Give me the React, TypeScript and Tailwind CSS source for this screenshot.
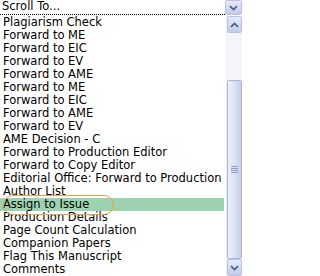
import React from "react";

const items = [
  "Plagiarism Check",
  "Forward to ME",
  "Forward to EIC",
  "Forward to EV",
  "Forward to AME",
  "Forward to ME",
  "Forward to EIC",
  "Forward to AME",
  "Forward to EV",
  "AME Decision - C",
  "Forward to Production Editor",
  "Forward to Copy Editor",
  "Editorial Office: Forward to Production",
  "Author List",
  "Assign to Issue",
  "Production Details",
  "Page Count Calculation",
  "Companion Papers",
  "Flag This Manuscript",
  "Comments",
];

const Chevron = ({ up }: { up?: boolean }) => (
  <svg width="9" height="6" viewBox="0 0 9 6" className={up ? "rotate-180" : ""}>
    <path d="M1 1.2 L4.5 4.6 L8 1.2" fill="none" stroke="#4d6185" strokeWidth="1.8" />
  </svg>
);

const ScrollButton = ({ up }: { up?: boolean }) => (
  <div className="h-[17px] w-full flex items-center justify-center rounded-[2px] border border-[#b7c1e0] bg-gradient-to-b from-[#e6ebfb] to-[#c3cbea]">
    <Chevron up={up} />
  </div>
);

export default function App() {
  return (
    <div
      className="w-[242px] h-[276px] bg-white text-black overflow-hidden flex flex-col"
      style={{ fontFamily: '"DejaVu Sans", Verdana, sans-serif' }}
    >
      {/* select header */}
      <div className="h-[16px] flex shrink-0">
        <div className="flex-1 h-[15px] border-b border-dotted border-black flex items-center pl-[2px] text-[11.5px] leading-none">
          Scroll To...
        </div>
        <div className="w-[17px] h-[15px] flex items-center justify-center rounded-[2px] border border-[#b7c1e0] bg-gradient-to-b from-[#e6ebfb] to-[#c3cbea]">
          <Chevron />
        </div>
      </div>

      {/* list */}
      <div className="flex-1 flex">
        <div className="flex-1 flex flex-col relative">
          {items.map((t, i) => (
            <div
              key={i}
              className={`h-[13px] pl-[3px] text-[11.5px] leading-[13px] whitespace-nowrap ${
                t === "Assign to Issue" ? "bg-[#9dd2b1] mr-[2px]" : ""
              }`}
            >
              {t}
            </div>
          ))}
          <div className="absolute left-[3px] top-[179px] w-[111px] h-[20px] rounded-full border border-[#e8a43a] pointer-events-none" />
        </div>

        {/* scrollbar */}
        <div className="w-[16px] flex flex-col bg-[#f4f4fa] border-l border-[#eef0f8]">
          <ScrollButton up />
          <div className="h-[47px]" />
          <div className="flex-1 rounded-[2px] border border-[#aab3d8] bg-gradient-to-r from-[#eef0fb] via-[#dde1f4] to-[#c9cee8] flex items-center justify-center">
            <div className="flex flex-col gap-[1px]">
              <div className="w-[7px] h-[1px] bg-[#8e9bc8]" />
              <div className="w-[7px] h-[1px] bg-[#8e9bc8]" />
              <div className="w-[7px] h-[1px] bg-[#8e9bc8]" />
              <div className="w-[7px] h-[1px] bg-[#8e9bc8]" />
            </div>
          </div>
          <ScrollButton />
        </div>
      </div>
    </div>
  );
}
